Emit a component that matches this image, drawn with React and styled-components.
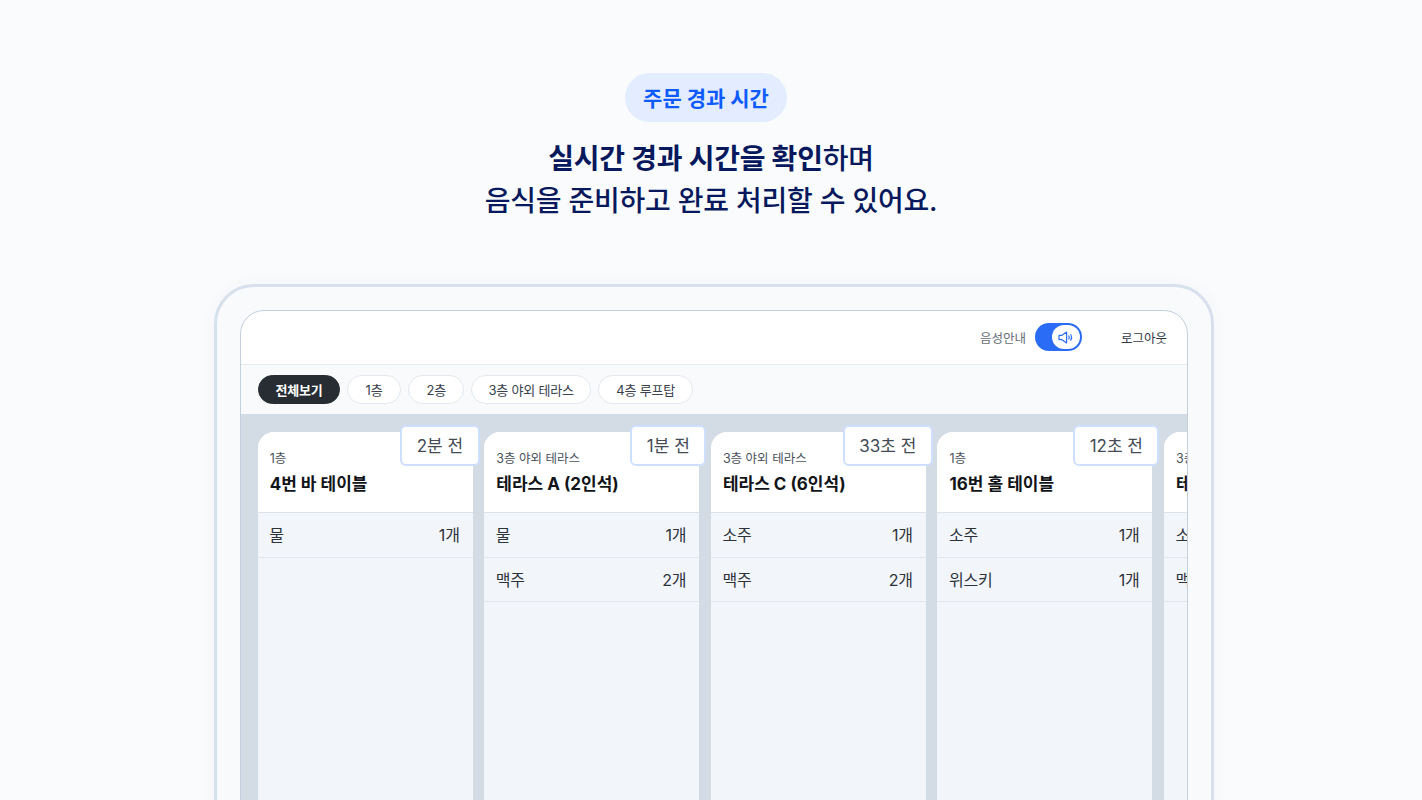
import React from "react";
import styled, { createGlobalStyle } from "styled-components";

const GlobalStyle = createGlobalStyle`
  * { box-sizing: border-box; }
  html, body { margin: 0; padding: 0; height: 100%; overflow: hidden; }
  body {
    background: #fafbfd;
    font-family: Inter, "Noto Sans CJK KR", sans-serif;
  }
`;

const Page = styled.div`
  width: 1422px;
  height: 800px;
  overflow: hidden;
  display: flex;
  flex-direction: column;
  align-items: center;
  padding-top: 73px;
`;

const Badge = styled.div`
  flex: none;
  height: 49px;
  width: 162px;
  margin-right: 10px;
  display: flex;
  align-items: center;
  justify-content: center;
  border-radius: 25px;
  background: #e3edff;
  color: #0f5bff;
  font-size: 21px;
  font-weight: 700;
  padding-bottom: 1px;
`;

const Title = styled.h1`
  flex: none;
  margin: 16px 0 0;
  text-align: center;
  color: #07195c;
  font-size: 28px;
  line-height: 42px;
  font-weight: 500;
  letter-spacing: -0.24px;

  strong {
    font-weight: 700;
  }
`;

const Frame = styled.div`
  flex: none;
  margin: 62px 0 0 6px;
  width: 1000px;
  height: 700px;
  padding: 23px 23px 0;
  border: 3px solid #d7e0ec;
  border-radius: 40px;
  background: #f8fafc;
  box-shadow: 0 0 16px rgba(60, 80, 110, 0.04);
`;

const Screen = styled.div`
  height: 660px;
  width: 948px;
  border: 1px solid #c5d0df;
  border-radius: 24px;
  overflow: hidden;
  background: #d3dbe5;
`;

const TopBar = styled.div`
  height: 54px;
  background: #fff;
  border-bottom: 1px solid #e8edf3;
  display: flex;
  align-items: center;
  justify-content: flex-end;
  padding: 0 20px 1px 0;
  font-size: 12.5px;
`;

const VoiceLabel = styled.span`
  color: #666c75;
  margin-right: 9px;
`;

const Toggle = styled.div`
  width: 47px;
  height: 28px;
  border-radius: 14px;
  background: #2b6cf6;
  display: flex;
  align-items: center;
  justify-content: flex-end;
  padding-right: 2px;
  margin-right: 39px;
`;

const Knob = styled.div`
  width: 28px;
  height: 24px;
  border-radius: 12px;
  background: #fff;
  display: flex;
  align-items: center;
  justify-content: center;
`;

const Logout = styled.span`
  color: #333a44;
`;

const Tabs = styled.div`
  height: 49px;
  background: #f8fafc;
  display: flex;
  align-items: center;
  gap: 7px;
  padding-left: 17px;
`;

const Tab = styled.div`
  height: 29px;
  padding: 0 ${(p) => p.$pad || 17.5}px 1px;
  border-radius: 15px;
  display: flex;
  align-items: center;
  font-size: 13px;
  letter-spacing: -0.2px;
  border: 1px solid ${(p) => (p.$active ? "#282c33" : "#e3e8ef")};
  background: ${(p) => (p.$active ? "#282c33" : "#fff")};
  color: ${(p) => (p.$active ? "#fff" : "#3a424d")};
  font-weight: ${(p) => (p.$active ? 700 : 400)};
`;

const Board = styled.div`
  display: flex;
  gap: 11.6px;
  padding: 18px 0 0 16.7px;
`;

const Card = styled.div`
  flex: none;
  position: relative;
  width: 215px;
  height: 420px;
  border-radius: 16px 16px 0 0;
  background: #f2f5fa;
`;

const CardHead = styled.div`
  height: 81px;
  padding: 18px 12px 0;
  background: #fff;
  border-radius: 16px 16px 0 0;
  border-bottom: 1px solid #dbe2ea;
`;

const Floor = styled.div`
  font-size: 12.5px;
  line-height: 18px;
  color: #4a525d;
`;

const TableName = styled.div`
  margin-top: 4px;
  font-size: 17px;
  line-height: 25px;
  font-weight: 700;
  color: #111418;
  white-space: nowrap;
`;

const Row = styled.div`
  height: 44.5px;
  padding: 0 13px 1.5px 11.5px;
  display: flex;
  align-items: center;
  justify-content: space-between;
  border-bottom: 1px solid #e2e7ee;
  font-size: 16px;
  letter-spacing: -0.2px;
  color: #2c323a;
  white-space: nowrap;
`;

const TimeTag = styled.div`
  position: absolute;
  top: -7px;
  right: -7px;
  height: 41px;
  padding: 0 14.5px 2px;
  display: flex;
  align-items: center;
  border: 2px solid #cfdfff;
  border-radius: 6px;
  background: #fff;
  font-size: 17px;
  color: #444b55;
  white-space: nowrap;
`;

const SpeakerIcon = () => (
  <svg width="16" height="15" viewBox="0 0 16 15" fill="none" stroke="#2b6cf6" strokeWidth="1.2" strokeLinejoin="round" strokeLinecap="round">
    <path d="M1 5.4v4.2h2.6l5 3.4V2L3.6 5.4z" />
    <path d="M10.8 6c.5.9.5 2.1 0 3" />
    <path d="M12.8 4.8c1 1.7 1 3.7 0 5.4" />
  </svg>
);

const tabs = [
  { label: "전체보기", active: true, pad: 16.5 },
  { label: "1층" },
  { label: "2층" },
  { label: "3층 야외 테라스", pad: 16 },
  { label: "4층 루프탑" },
];

const orders = [
  { floor: "1층", name: "4번 바 테이블", time: "2분 전", items: [["물", "1개"]] },
  { floor: "3층 야외 테라스", name: "테라스 A (2인석)", time: "1분 전", items: [["물", "1개"], ["맥주", "2개"]] },
  { floor: "3층 야외 테라스", name: "테라스 C (6인석)", time: "33초 전", items: [["소주", "1개"], ["맥주", "2개"]] },
  { floor: "1층", name: "16번 홀 테이블", time: "12초 전", items: [["소주", "1개"], ["위스키", "1개"]] },
  { floor: "3층 야외 테라스", name: "테라스 B (4인석)", time: "8초 전", items: [["소주", "1개"], ["맥주", "2개"]] },
];

export default function App() {
  return (
    <Page>
      <GlobalStyle />
      <Badge>주문 경과 시간</Badge>
      <Title>
        <strong>실시간 경과 시간을 확인</strong>하며
        <br />
        음식을 준비하고 완료 처리할 수 있어요.
      </Title>
      <Frame>
        <Screen>
          <TopBar>
            <VoiceLabel>음성안내</VoiceLabel>
            <Toggle>
              <Knob>
                <SpeakerIcon />
              </Knob>
            </Toggle>
            <Logout>로그아웃</Logout>
          </TopBar>
          <Tabs>
            {tabs.map((t) => (
              <Tab key={t.label} $active={t.active} $pad={t.pad}>
                {t.label}
              </Tab>
            ))}
          </Tabs>
          <Board>
            {orders.map((o) => (
              <Card key={o.name}>
                <CardHead>
                  <Floor>{o.floor}</Floor>
                  <TableName>{o.name}</TableName>
                </CardHead>
                {o.items.map(([menu, qty]) => (
                  <Row key={menu}>
                    <span>{menu}</span>
                    <span>{qty}</span>
                  </Row>
                ))}
                <TimeTag>{o.time}</TimeTag>
              </Card>
            ))}
          </Board>
        </Screen>
      </Frame>
    </Page>
  );
}
